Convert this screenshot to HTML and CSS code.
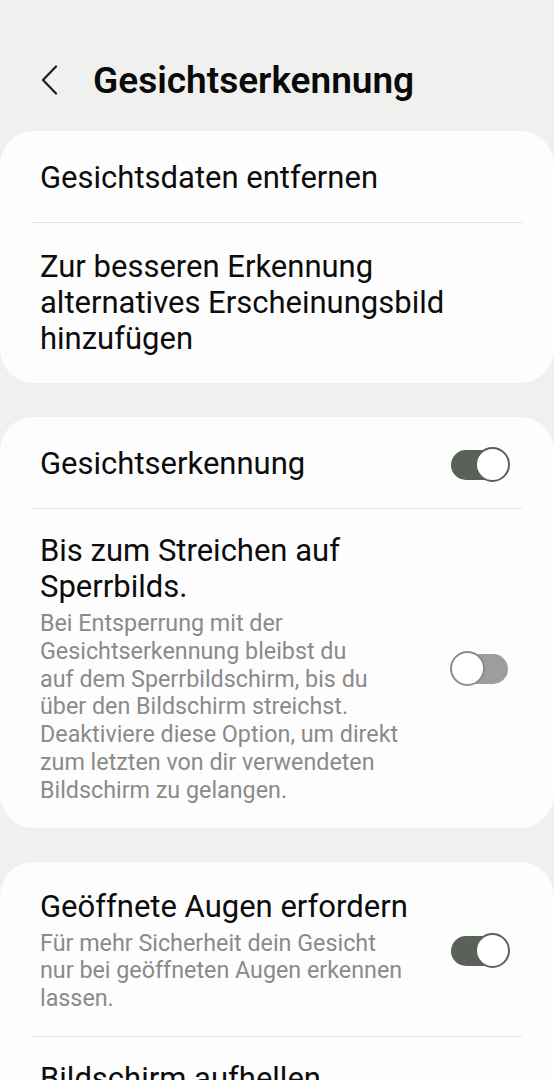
FILE: index.html
```html
<!DOCTYPE html>
<html lang="de">
<head>
    <meta charset="UTF-8">
    <meta name="viewport" content="width=device-width, initial-scale=1.0">
    <title>Gesichtserkennung</title>
    <link rel="stylesheet" href="styles.css">
</head>
<body>

    <!-- Header -->
    <header class="topbar">
        <button class="back" aria-label="Zurück">
            <svg width="18" height="30" viewBox="0 0 18 30">
                <polyline points="15,1.5 2,15 15,28.5" fill="none" stroke="#1c1c1c" stroke-width="2.2" stroke-linecap="round" stroke-linejoin="round"/>
            </svg>
        </button>
        <h1>Gesichtserkennung</h1>
    </header>

    <main class="list">
        <section class="card">
            <div class="row">
                <div class="row-text">
                    <div class="row-title">Gesichtsdaten entfernen</div>
                </div>
            </div>
            <div class="row">
                <div class="row-text">
                    <div class="row-title">Zur besseren Erkennung<br>alternatives Erscheinungsbild<br>hinzufügen</div>
                </div>
            </div>
        </section>

        <section class="card">
            <div class="row">
                <div class="row-text">
                    <div class="row-title">Gesichtserkennung</div>
                </div>
                <span class="switch on"></span>
            </div>
            <div class="row has-sub">
                <div class="row-text">
                    <div class="row-title">Bis zum Streichen auf<br>Sperrbilds.</div>
                    <div class="row-sub">Bei Entsperrung mit der<br>Gesichtserkennung bleibst du<br>auf dem Sperrbildschirm, bis du<br>über den Bildschirm streichst.<br>Deaktiviere diese Option, um direkt<br>zum letzten von dir verwendeten<br>Bildschirm zu gelangen.</div>
                </div>
                <span class="switch"></span>
            </div>
        </section>

        <section class="card">
            <div class="row has-sub">
                <div class="row-text">
                    <div class="row-title">Geöffnete Augen erfordern</div>
                    <div class="row-sub">Für mehr Sicherheit dein Gesicht<br>nur bei geöffneten Augen erkennen<br>lassen.</div>
                </div>
                <span class="switch on"></span>
            </div>
            <div class="row has-sub">
                <div class="row-text">
                    <div class="row-title">Bildschirm aufhellen</div>
                    <div class="row-sub">Bildschirmhelligkeit vorübergehend<br>erhöhen, damit dein Gesicht auch<br>im Dunkeln erkannt wird.</div>
                </div>
                <span class="switch"></span>
            </div>
        </section>
    </main>

</body>
</html>
```

FILE: styles.css
```css
body {
    margin: 0;
    background: #f0f1ef;
    font-family: Roboto, "Noto Sans", Arial, sans-serif;
    color: #0c0c0c;
}
.topbar {
    display: flex;
    align-items: center;
    height: 80px;
    padding: 40px 0 11px 0;
}
.back {
    background: none;
    border: none;
    padding: 0;
    margin-left: 41px;
    width: 18px;
    height: 30px;
    display: flex;
}
h1 {
    margin: 0 0 0 34px;
    font-size: 37px;
    font-weight: 600;
    color: #0a0a0a;
}
.list {
    display: flex;
    flex-direction: column;
    gap: 34px;
}
.card {
    background: #fdfdfd;
    border-radius: 34px;
    padding-top: 3px;
}
.row {
    display: flex;
    align-items: center;
    margin: 0 32px;
    padding: 26px 12px 26px 8px;
}
.row.has-sub {
    padding-top: 24px;
    padding-bottom: 23px;
}
.row + .row {
    border-top: 1px solid #e3e3e3;
}
.row-text {
    flex: 1;
}
.row-title {
    font-size: 31px;
    line-height: 36px;
}
.row-sub {
    margin-top: 5px;
    font-size: 23.3px;
    line-height: 27.8px;
    color: #8a8a8a;
}
.switch {
    position: relative;
    flex: none;
    width: 60px;
    height: 35px;
    margin-left: 30px;
}
.switch::before {
    content: "";
    position: absolute;
    left: 1px;
    right: 2px;
    top: 3px;
    bottom: 2px;
    border-radius: 16px;
    background: #9d9d9d;
}
.switch::after {
    content: "";
    position: absolute;
    left: 0;
    top: 0;
    width: 31px;
    height: 31px;
    border-radius: 50%;
    border: 2px solid #8b8b8b;
    background: #fff;
}
.switch.on::before {
    background: #5a6158;
}
.switch.on::after {
    left: auto;
    right: 0;
    border-color: #5a6158;
}
```
